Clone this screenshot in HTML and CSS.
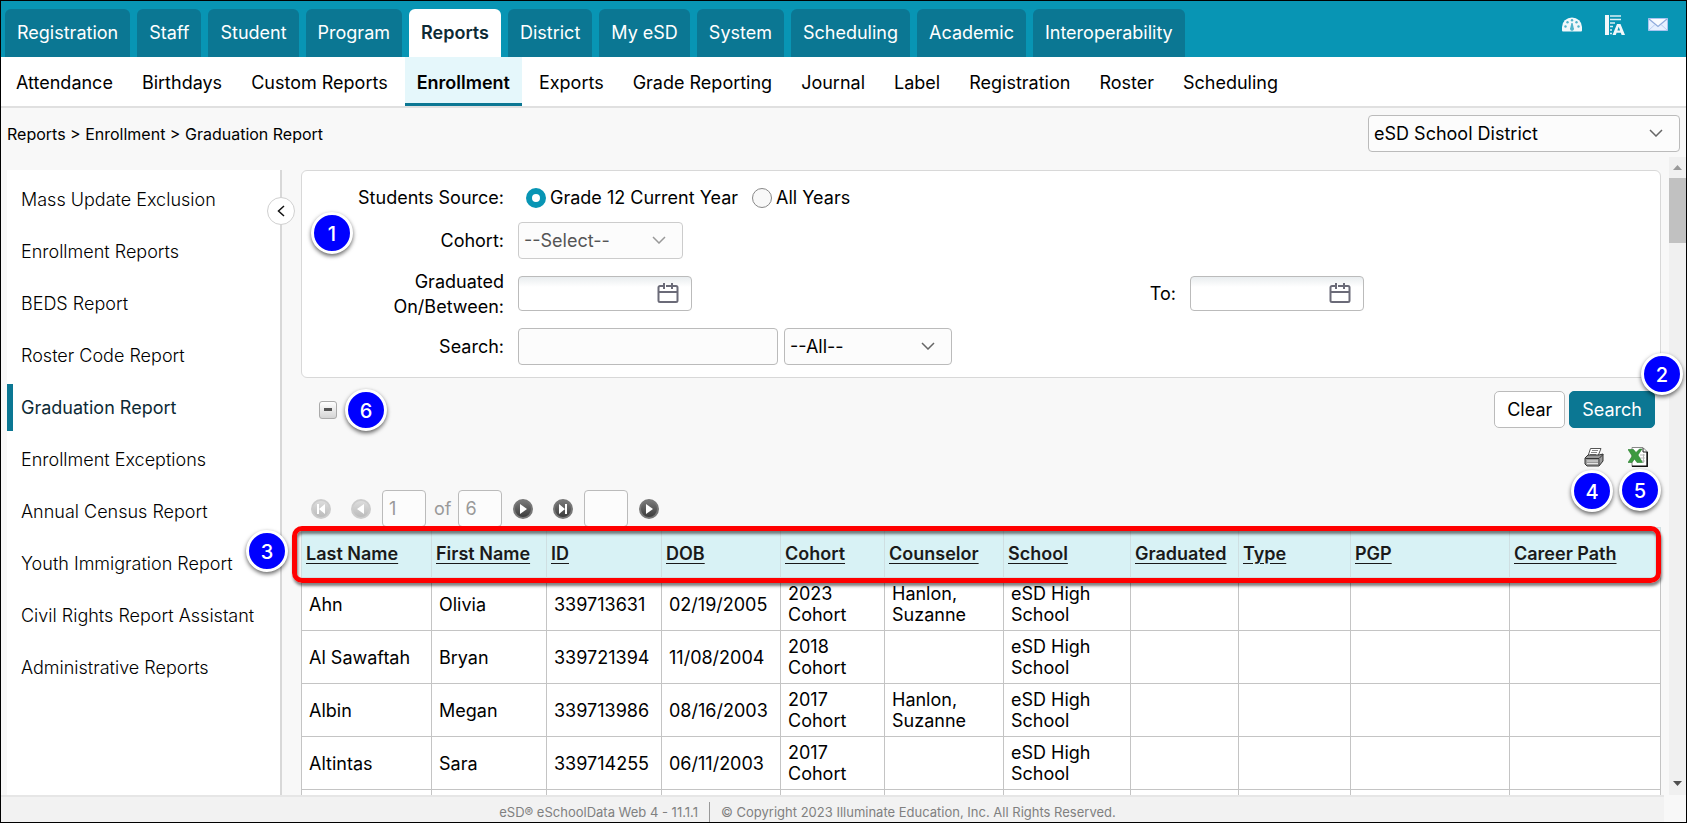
FILE: index.html
```
<!DOCTYPE html>
<html lang="en">
<head>
    <meta charset="UTF-8">
    <meta name="viewport" content="width=device-width, initial-scale=1.0">
    <title>Graduation Report</title>
    <link rel="stylesheet" href="styles.css">
</head>
<body>
    <header class="topbar">
        <nav class="tabs" aria-label="Modules">
            <a class="tab" href="#">Registration</a>
            <a class="tab" href="#">Staff</a>
            <a class="tab" href="#">Student</a>
            <a class="tab" href="#">Program</a>
            <a class="tab active" href="#">Reports</a>
            <a class="tab" href="#">District</a>
            <a class="tab" href="#">My eSD</a>
            <a class="tab" href="#">System</a>
            <a class="tab" href="#">Scheduling</a>
            <a class="tab" href="#">Academic</a>
            <a class="tab" href="#">Interoperability</a>
        </nav>
        <div class="top-icons">
            <a href="#" aria-label="Dashboard">
                <svg width="20" height="20" viewBox="0 0 20 20">
                    <path d="M0 12a10 9.500 0 0 1 20 0v3.500q0 1-1 1H1q-1 0-1-1z" fill="#f2f7fa"/>
                    <g fill="#4fb3ca">
                        <circle cx="3.500" cy="11.500" r="1.200"/>
                        <circle cx="5.500" cy="7.200" r="1.200"/>
                        <circle cx="10" cy="5.200" r="1.200"/>
                        <circle cx="14.500" cy="7.200" r="1.200"/>
                        <circle cx="16.500" cy="11.500" r="1.200"/>
                        <path d="M9.400 8h1.200l1 4.500a2 2 0 1 1-3.200 0z"/>
                    </g>
                </svg>
            </a>
            <a href="#" aria-label="Gradebook">
                <svg width="20" height="20" viewBox="0 0 20 20">
                    <path d="M0 0h4v20H0z" fill="#f2f7fa"/>
                    <path d="M5 1h11M5 4.500h11M5 8h5M5 11.500h3M5 15h2M5 18.500h2" stroke="#d9eef4" stroke-width="1.500"/>
                    <path d="M7.500 20 12 9h3.500L20 20h-3.400l-.8-2.200h-4.200L10.800 20zM12.400 15.600h2.700l-1.400-3.800z" fill="#f2f7fa" fill-rule="evenodd"/>
                </svg>
            </a>
            <a href="#" aria-label="Messages">
                <svg width="20" height="20" viewBox="0 0 20 20">
                    <path d="M.500 3.500h19v12H.500z" fill="#e6f0ff" stroke="#a9c4f0"/>
                    <path d="M1 4l9 7.500L19 4" fill="#f8fbff" stroke="#8fabdc" stroke-width="1.300"/>
                    <path d="M1 15l6-5.500M19 15l-6-5.500" stroke="#b9cdf2"/>
                </svg>
            </a>
        </div>
    </header>

    <nav class="subnav" aria-label="Reports">
        <a href="#">Attendance</a>
        <a href="#">Birthdays</a>
        <a href="#">Custom Reports</a>
        <a class="active" href="#">Enrollment</a>
        <a href="#">Exports</a>
        <a href="#">Grade Reporting</a>
        <a href="#">Journal</a>
        <a href="#">Label</a>
        <a href="#">Registration</a>
        <a href="#">Roster</a>
        <a href="#">Scheduling</a>
    </nav>

    <div class="crumb-row">
        <div class="breadcrumb">Reports &gt; Enrollment &gt; Graduation Report</div>
        <div class="select-box district">
            <select aria-label="District">
                <option>eSD School District</option>
            </select>
            <svg class="chevron" width="14" height="8" viewBox="0 0 14 8"><path d="M1 1l6 6 6-6"/></svg>
        </div>
    </div>

    <div class="workspace">
        <aside class="sidebar">
            <a href="#">Mass Update Exclusion</a>
            <a href="#">Enrollment Reports</a>
            <a href="#">BEDS Report</a>
            <a href="#">Roster Code Report</a>
            <a class="active" href="#">Graduation Report</a>
            <a href="#">Enrollment Exceptions</a>
            <a href="#">Annual Census Report</a>
            <a href="#">Youth Immigration Report</a>
            <a href="#">Civil Rights Report Assistant</a>
            <a href="#">Administrative Reports</a>
            <button class="collapse" type="button" aria-label="Collapse menu">
                <svg width="8" height="12" viewBox="0 0 8 12"><path d="M7 1L1.500 6 7 11"/></svg>
            </button>
        </aside>

        <main class="content">
            <form class="filters">
                <span class="label">Students Source:</span>
                <div class="field source">
                    <label><input type="radio" name="source" checked>Grade 12 Current Year</label>
                    <label><input type="radio" name="source">All Years</label>
                </div>

                <label class="label" for="cohort">Cohort:</label>
                <div class="field">
                    <div class="select-box cohort">
                        <select id="cohort" disabled>
                            <option>--Select--</option>
                        </select>
                        <svg class="chevron" width="14" height="8" viewBox="0 0 14 8"><path d="M1 1l6 6 6-6"/></svg>
                    </div>
                </div>

                <label class="label" for="date-from">Graduated On/Between:</label>
                <div class="field dates">
                    <div class="date-box">
                        <input type="text" id="date-from">
                        <svg width="22" height="22" viewBox="0 0 22 22"><path d="M6 4H3a1.500 1.500 0 0 0-1.500 1.500v13A1.500 1.500 0 0 0 3 20h16a1.500 1.500 0 0 0 1.500-1.500v-13A1.500 1.500 0 0 0 19 4h-3M9 4h5M7 1v6M15 1v6M1.500 10h19"/></svg>
                    </div>
                    <label class="label" for="date-to">To:</label>
                    <div class="date-box">
                        <input type="text" id="date-to">
                        <svg width="22" height="22" viewBox="0 0 22 22"><path d="M6 4H3a1.500 1.500 0 0 0-1.500 1.500v13A1.500 1.500 0 0 0 3 20h16a1.500 1.500 0 0 0 1.500-1.500v-13A1.500 1.500 0 0 0 19 4h-3M9 4h5M7 1v6M15 1v6M1.500 10h19"/></svg>
                    </div>
                </div>

                <label class="label" for="search">Search:</label>
                <div class="field">
                    <input class="search-text" type="text" id="search">
                    <div class="select-box scope">
                        <select aria-label="Search in">
                            <option>--All--</option>
                        </select>
                        <svg class="chevron" width="14" height="8" viewBox="0 0 14 8"><path d="M1 1l6 6 6-6"/></svg>
                    </div>
                </div>
                <span class="badge badge-1">1</span>
            </form>

            <div class="actions">
                <button class="toggle" type="button" aria-label="Collapse filters"></button>
                <div class="buttons">
                    <button class="btn" type="button">Clear</button>
                    <button class="btn primary" type="button">Search</button>
                </div>
                <span class="badge badge-6">6</span>
                <span class="badge badge-2">2</span>
            </div>

            <div class="exports">
                <button class="icon-btn" type="button" aria-label="Print">
                    <svg width="20" height="20" viewBox="0 0 20 20">
                        <path d="M6.500 1.500H17L14 9H4z" fill="#fff" stroke="#555"/>
                        <path d="M8 3.500h6M7 5.500h6M6 7.500h6" stroke="#888"/>
                        <path d="M1 11l3-3h11l4-1v7l-4 5H3l-2-2z" fill="#9a9a9a" stroke="#333"/>
                        <path d="M1.500 11.500H15l4-4" fill="none" stroke="#333"/>
                        <path d="M3 14h11M3 16.500h11" stroke="#e4e4e4"/>
                        <path d="M15 12v6" stroke="#444"/>
                    </svg>
                    <span class="badge badge-4">4</span>
                </button>
                <button class="icon-btn" type="button" aria-label="Export to Excel">
                    <svg width="20" height="20" viewBox="0 0 20 20">
                        <path d="M4 .500h11l4 4v15H4z" fill="#fff" stroke="#888"/>
                        <path d="M15 1v4h4.500" fill="none" stroke="#222"/>
                        <path d="M19.200 5v14.300H4" fill="none" stroke="#111" stroke-width="1.500"/>
                        <path d="M12 8h5M12 11h5M12 14h5M15.500 7v9" stroke="#bbb"/>
                        <path d="M0 2.500h5.500L8 5.500 11.500 2H14L10 8l4.500 7.500H9L6.500 12 4 15.500H0L4.200 9z" fill="#3c9a3f" stroke="#2c7d30" stroke-width=".6"/>
                    </svg>
                    <span class="badge badge-5">5</span>
                </button>
            </div>

            <div class="pager">
                <button class="page-btn" type="button" disabled aria-label="First page">
                    <svg width="8" height="10" viewBox="0 0 8 10"><path d="M0 0h2v10H0zM8 0v10L2 5z"/></svg>
                </button>
                <button class="page-btn" type="button" disabled aria-label="Previous page">
                    <svg width="8" height="10" viewBox="0 0 8 10"><path d="M7 0v10L0 5z"/></svg>
                </button>
                <input type="text" value="1" disabled aria-label="Page">
                <span class="of">of</span>
                <input type="text" value="6" disabled aria-label="Pages">
                <button class="page-btn" type="button" aria-label="Next page">
                    <svg width="8" height="10" viewBox="0 0 8 10"><path d="M1 0v10l7-5z"/></svg>
                </button>
                <button class="page-btn" type="button" aria-label="Last page">
                    <svg width="8" height="10" viewBox="0 0 8 10"><path d="M6 0h2v10H6zM0 0v10l6-5z"/></svg>
                </button>
                <input type="text" aria-label="Go to page">
                <button class="page-btn" type="button" aria-label="Go">
                    <svg width="8" height="10" viewBox="0 0 8 10"><path d="M1 0v10l7-5z"/></svg>
                </button>
            </div>

            <div class="results">
                <table>
                    <colgroup>
                        <col class="c-last"><col class="c-first"><col class="c-id"><col class="c-dob"><col class="c-cohort"><col class="c-counselor"><col class="c-school"><col class="c-graduated"><col class="c-type"><col class="c-pgp"><col class="c-career">
                    </colgroup>
                    <thead>
                        <tr>
                            <th><a href="#">Last Name</a></th>
                            <th><a href="#">First Name</a></th>
                            <th><a href="#">ID</a></th>
                            <th><a href="#">DOB</a></th>
                            <th><a href="#">Cohort</a></th>
                            <th><a href="#">Counselor</a></th>
                            <th><a href="#">School</a></th>
                            <th><a href="#">Graduated</a></th>
                            <th><a href="#">Type</a></th>
                            <th><a href="#">PGP</a></th>
                            <th><a href="#">Career Path</a></th>
                        </tr>
                    </thead>
                    <tbody>
                        <tr><td>Ahn</td><td>Olivia</td><td>339713631</td><td>02/19/2005</td><td>2023 Cohort</td><td>Hanlon, Suzanne</td><td>eSD High School</td><td></td><td></td><td></td><td></td></tr>
                        <tr><td>Al Sawaftah</td><td>Bryan</td><td>339721394</td><td>11/08/2004</td><td>2018 Cohort</td><td></td><td>eSD High School</td><td></td><td></td><td></td><td></td></tr>
                        <tr><td>Albin</td><td>Megan</td><td>339713986</td><td>08/16/2003</td><td>2017 Cohort</td><td>Hanlon, Suzanne</td><td>eSD High School</td><td></td><td></td><td></td><td></td></tr>
                        <tr><td>Altintas</td><td>Sara</td><td>339714255</td><td>06/11/2003</td><td>2017 Cohort</td><td></td><td>eSD High School</td><td></td><td></td><td></td><td></td></tr>
                        <tr><td></td><td></td><td></td><td></td><td></td><td></td><td></td><td></td><td></td><td></td><td></td></tr>
                    </tbody>
                </table>
                <div class="callout"></div>
                <span class="badge badge-3">3</span>
            </div>
        </main>

        <div class="scrollbar" aria-hidden="true">
            <svg class="up" width="9" height="5" viewBox="0 0 9 5"><path d="M0 5l4.500-5L9 5z"/></svg>
            <div class="thumb"></div>
            <svg class="down" width="9" height="5" viewBox="0 0 9 5"><path d="M0 0l4.500 5L9 0z"/></svg>
        </div>
    </div>

    <footer class="footer">
        <span>eSD® eSchoolData Web 4 - 11.1.1</span>
        <span class="copyright">© Copyright 2023 Illuminate Education, Inc. All Rights Reserved.</span>
    </footer>
</body>
</html>
```
FILE: styles.css
```
* {
    box-sizing: border-box;
}
body {
    margin: 0;
    height: 100vh;
    display: flex;
    flex-direction: column;
    overflow: hidden;
    border: 1px solid #000;
    background-color: #f8f8f8;
    color: #000;
    font-family: Inter, "Liberation Sans", sans-serif;
    font-size: 18px;
}
a {
    color: inherit;
    text-decoration: none;
}
button, input, select {
    font: inherit;
    color: inherit;
}
svg {
    display: block;
    fill: none;
}

/* Header */
.topbar {
    display: flex;
    justify-content: space-between;
    height: 56px;
    padding: 8px 18px 0 4px;
    background-color: #0895b4;
}
.tabs {
    display: flex;
    gap: 7px;
}
.tab {
    padding: 0 12px;
    line-height: 48px;
    border-radius: 6px 6px 0 0;
    background-color: #0b7793;
    color: #fff;
}
.tab.active {
    background-color: #fff;
    color: #0d2a35;
    font-weight: 600;
}
.top-icons {
    display: flex;
    gap: 23px;
    padding-top: 6px;
}
.subnav {
    display: flex;
    flex-shrink: 0;
    gap: 5px;
    padding-left: 3px;
    background-color: #fff;
    border-bottom: 2px solid #e0e0e0;
}
.subnav a {
    padding: 3px 12px 0;
    line-height: 46px;
}
.subnav .active {
    background-color: #e5f7fb;
    box-shadow: inset 0 -3px #0b7793;
    font-weight: 600;
}
.crumb-row {
    display: flex;
    flex-shrink: 0;
    align-items: center;
    justify-content: space-between;
    height: 49px;
    padding: 2px 6px 0;
}
.breadcrumb {
    font-size: 16px;
}

/* Form controls */
.select-box {
    position: relative;
    height: 37px;
}
.select-box select {
    appearance: none;
    width: 100%;
    height: 100%;
    padding: 0 5px;
    border: 1px solid #bbb;
    border-radius: 4px;
    background-color: #fcfcfc;
}
.select-box select:disabled {
    color: #555;
    border-color: #ccc;
    opacity: 1;
}
.select-box select:disabled + .chevron {
    stroke: #999;
}
.chevron {
    position: absolute;
    top: 14px;
    right: 17px;
    stroke: #666;
    stroke-width: 1.5;
    pointer-events: none;
}
.district {
    width: 312px;
}
.cohort {
    width: 165px;
}
.scope {
    width: 168px;
}
input[type="text"] {
    border: 1px solid #bbb;
    border-radius: 4px;
    background-color: #fcfcfc;
}
input[type="radio"] {
    appearance: none;
    width: 20px;
    height: 20px;
    margin: 0 4px 0 0;
    border: 1px solid #888;
    border-radius: 50%;
    background-color: #f8f8f8;
}
input[type="radio"]:checked {
    border: 6px solid #0895b4;
    background-color: #fff;
}

/* Workspace */
.workspace {
    display: flex;
    flex: 1;
    min-height: 0;
    overflow: hidden;
}
.sidebar {
    position: relative;
    display: flex;
    flex-direction: column;
    flex-shrink: 0;
    gap: 5px;
    width: 275px;
    margin: 13px 0 0 6px;
    padding-top: 6px;
    background-color: #fff;
    border-right: 2px solid #d8d8d8;
}
.sidebar a {
    padding-left: 8px;
    line-height: 47px;
    font-weight: 300;
    border-left: 6px solid transparent;
}
.sidebar .active {
    border-color: #0b7793;
    color: #0d2a35;
    font-weight: 400;
}
.collapse {
    position: absolute;
    top: 27px;
    right: -15px;
    display: flex;
    align-items: center;
    justify-content: center;
    width: 28px;
    height: 28px;
    padding: 0;
    border: 1px solid #d0d0d0;
    border-radius: 50%;
    background-color: #fff;
}
.collapse svg {
    stroke: #111;
    stroke-width: 1.5;
}
.content {
    flex: 1;
    min-width: 0;
    padding: 13px 8px 0 19px;
}
.filters {
    position: relative;
    display: grid;
    grid-template-columns: 202px 1fr;
    column-gap: 14px;
    align-items: center;
    grid-template-rows: 33px 52px 55px 51px;
    padding: 10px 0 5px;
    background-color: #fff;
    border: 1px solid #d8d8d8;
    border-radius: 6px;
}
.label {
    text-align: right;
    line-height: 25px;
    padding-left: 50px;
}
.field {
    display: flex;
    align-items: center;
    gap: 6px;
}
.source {
    gap: 14px;
    padding-left: 8px;
}
.source label {
    display: flex;
    align-items: center;
}
.dates .label {
    width: 486px;
    padding: 0 8px 0 0;
}
.date-box {
    position: relative;
}
.date-box input {
    display: block;
    width: 174px;
    height: 35px;
    padding: 0 40px 0 6px;
    background: linear-gradient(#e9edef, #fff 10px);
}
.date-box svg {
    position: absolute;
    top: 6px;
    right: 13px;
    stroke: #6b6b78;
    stroke-width: 2;
}
.search-text {
    width: 260px;
    height: 37px;
}
.actions {
    position: relative;
    display: flex;
    align-items: center;
    justify-content: space-between;
    padding: 13px 6px 0 18px;
}
.toggle {
    display: flex;
    align-items: center;
    justify-content: center;
    width: 18px;
    height: 18px;
    padding: 0;
    border: 1px solid #aaa;
    border-radius: 3px;
    background: linear-gradient(#fff, #d4d4d4);
}
.toggle::before {
    content: "";
    width: 8px;
    height: 3px;
    background-color: #555;
}
.buttons {
    display: flex;
    gap: 4px;
}
.btn {
    height: 37px;
    padding: 0 12px;
    border: 1px solid #bbb;
    border-radius: 5px;
    background-color: #fff;
}
.btn.primary {
    border-color: #0b7793;
    background-color: #0b7793;
    color: #fff;
}
.exports {
    display: flex;
    justify-content: flex-end;
    gap: 24px;
    padding: 19px 13px 0;
}
.icon-btn {
    position: relative;
    padding: 0;
    border: none;
    background: none;
}
.pager {
    display: flex;
    align-items: center;
    height: 37px;
    margin-top: 23px;
    padding-left: 10px;
    color: #999;
}
.pager input {
    width: 44px;
    height: 37px;
    padding: 0 6px;
    margin-right: 8px;
}
.page-btn {
    display: flex;
    align-items: center;
    justify-content: center;
    width: 20px;
    height: 20px;
    margin-right: 20px;
    padding: 0;
    border: 2px solid #777;
    border-radius: 50%;
    background: linear-gradient(#777, #3c3c3c);
}
.page-btn svg {
    fill: #fff;
}
.page-btn:disabled {
    border-color: #ccc;
    background: linear-gradient(#ddd, #bbb);
}
.pager input + .page-btn {
    margin-left: 3px;
}
.page-btn + input {
    margin-left: -9px;
}
.of {
    margin-right: 7px;
}

/* Results table */
.results {
    position: relative;
}
table {
    width: 100%;
    table-layout: fixed;
    border-collapse: collapse;
    background-color: #fff;
}
.c-last { width: 130px; }
.c-first { width: 115px; }
.c-id { width: 115px; }
.c-dob { width: 119px; }
.c-cohort { width: 104px; }
.c-counselor { width: 119px; }
.c-school { width: 127px; }
.c-graduated { width: 108px; }
.c-type { width: 112px; }
.c-pgp { width: 159px; }
.c-career { width: 151px; }
th {
    height: 50px;
    padding: 2px 4px 0;
    text-align: left;
    font-weight: 600;
    color: #1a1a1a;
    background-color: #d8f2f5;
    border: 1px solid #cfdfe2;
    white-space: nowrap;
}
th a {
    text-decoration: underline;
    text-underline-offset: 3px;
}
td {
    height: 53px;
    padding: 0 7px;
    line-height: 21px;
    border: 1px solid #c4c4c4;
}

/* Numbered markers */
.callout {
    position: absolute;
    top: -1px;
    left: -9px;
    right: 0;
    height: 57px;
    border: 5px solid #f00;
    border-radius: 10px;
    box-shadow: 1px 3px 3px rgba(0,0,0,0.5), inset 1px 3px 3px rgba(0,0,0,0.5);
}
.badge {
    position: absolute;
    z-index: 1;
    width: 42px;
    height: 42px;
    border: 3px solid #fff;
    border-radius: 50%;
    background-color: #00f;
    color: #fff;
    font-size: 20px;
    font-weight: 500;
    line-height: 38px;
    text-align: center;
    box-shadow: 0 2px 4px rgba(0,0,0,0.6);
}
.badge-1 { top: 41px; left: 9px; }
.badge-2 { top: -25px; right: -22px; }
.badge-3 { top: 3px; left: -55px; }
.badge-4 { top: 23px; left: -13px; }
.badge-5 { top: 22px; left: -9px; }
.badge-6 { top: 11px; left: 44px; }

.scrollbar {
    display: flex;
    flex-direction: column;
    flex-shrink: 0;
    align-items: center;
    width: 17px;
    background-color: #f0f0f0;
}
.up {
    margin: 8px 0;
    fill: #999;
}
.thumb {
    width: 17px;
    height: 65px;
    background-color: #c1c1c1;
}
.down {
    margin: auto 0 9px;
    fill: #505050;
}
.footer {
    display: flex;
    flex-shrink: 0;
    align-items: flex-end;
    justify-content: center;
    height: 27px;
    margin-right: 22px;
    padding: 2px 50px 0 0;
    border-top: 2px solid #e6e6e6;
    background-color: #f2f2f2;
    color: #808080;
    font-size: 13px;
    line-height: 20px;
}
.copyright {
    margin-left: 11px;
    padding-left: 11px;
    border-left: 1px solid #999;
}
```
